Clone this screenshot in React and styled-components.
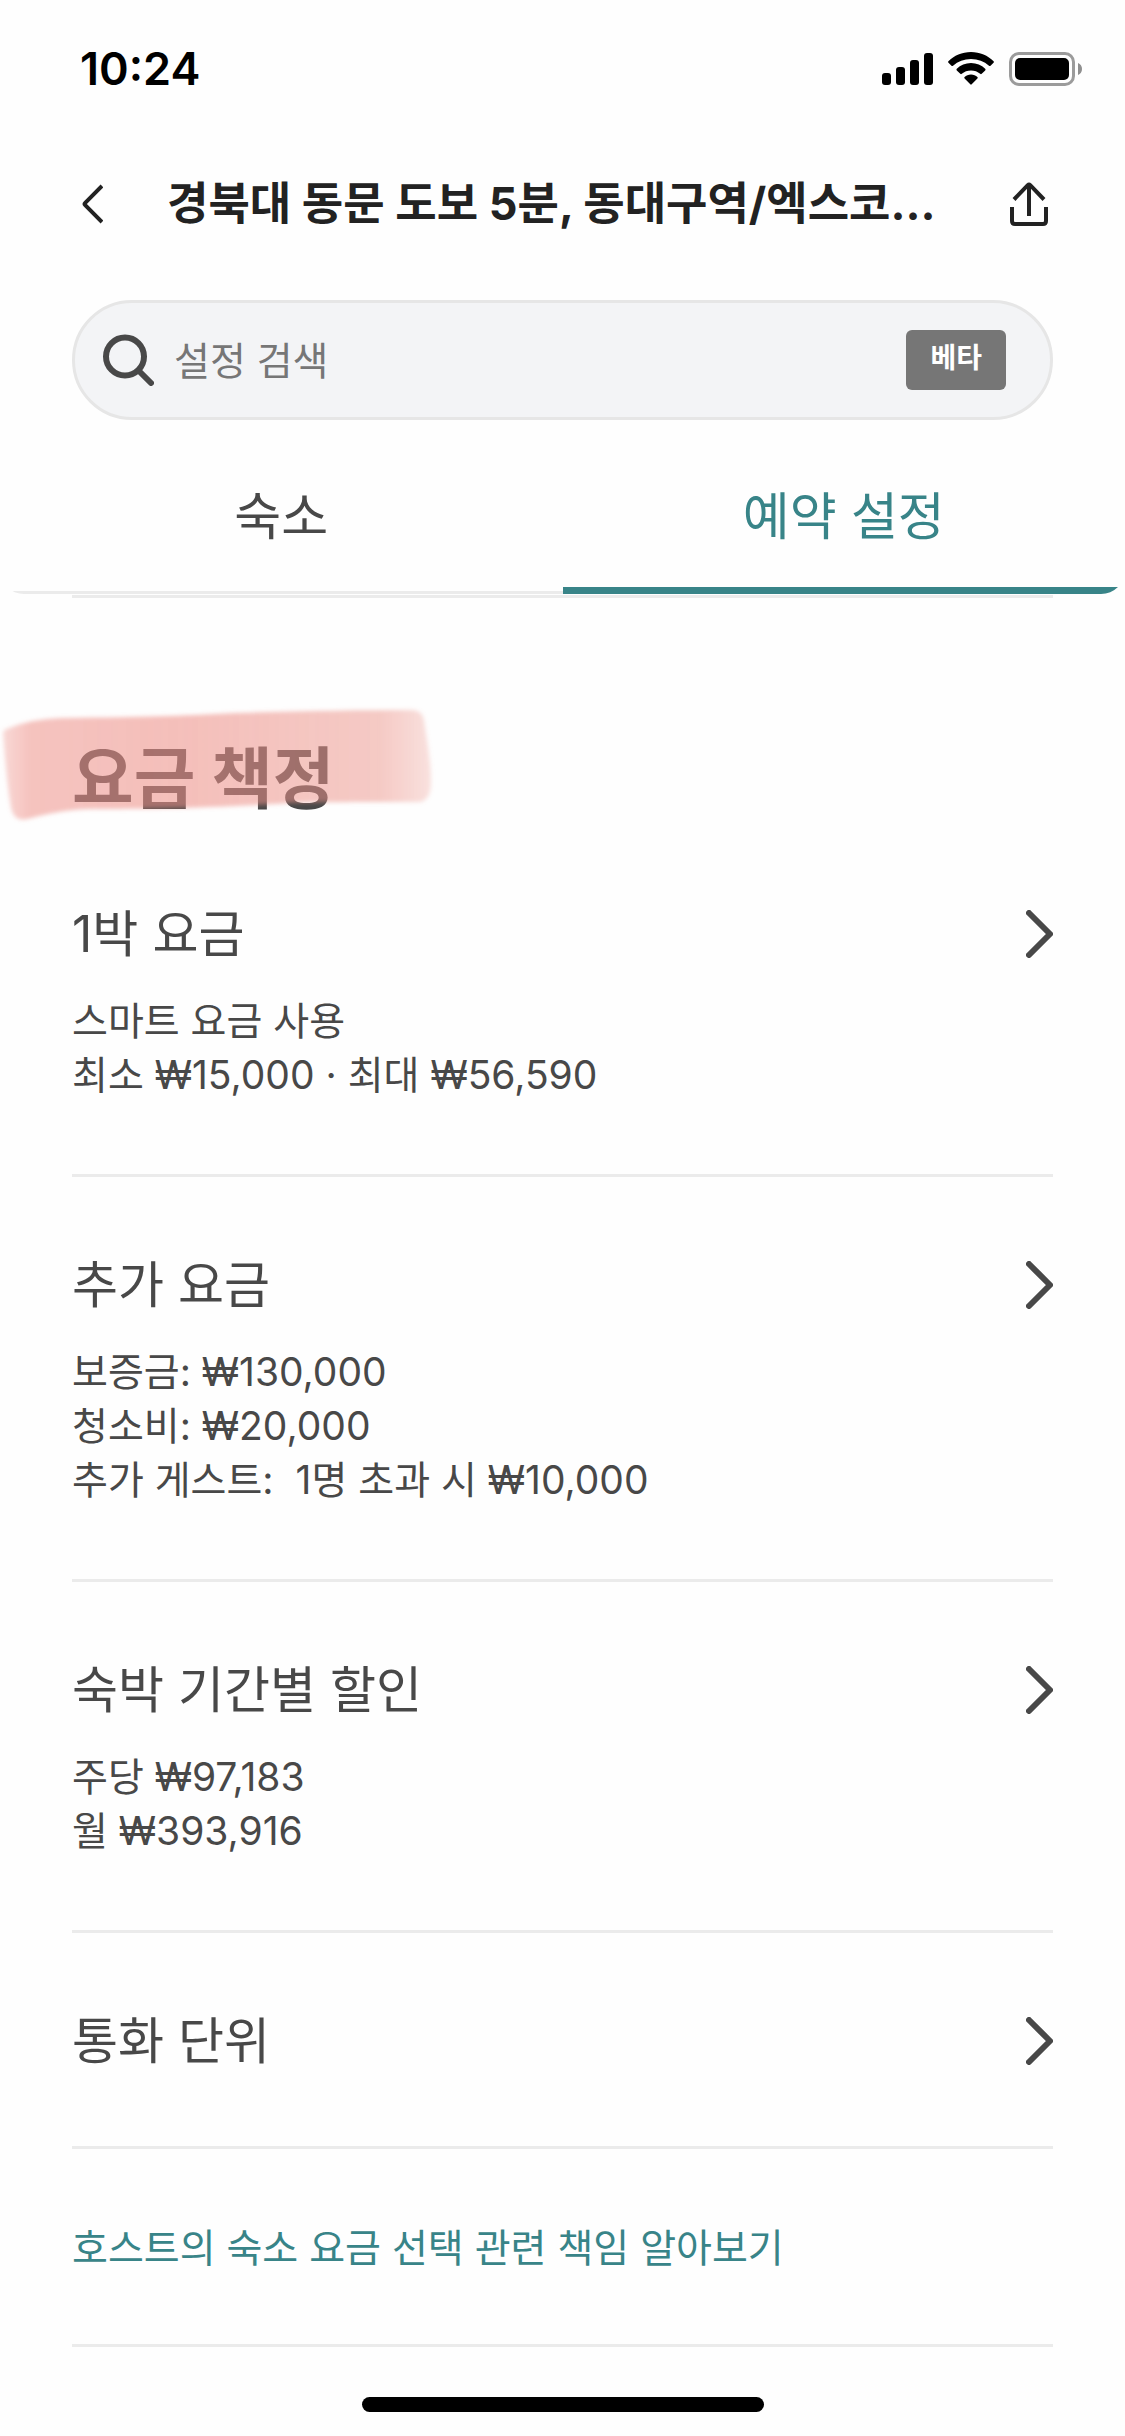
import { useState } from "react";
import styled, { createGlobalStyle } from "styled-components";

const priceSettings = [
    {
        title: "1박 요금",
        lines: ["스마트 요금 사용", "최소 ₩15,000 · 최대 ₩56,590"]
    },
    {
        title: "추가 요금",
        lines: ["보증금: ₩130,000", "청소비: ₩20,000", "추가 게스트:  1명 초과 시 ₩10,000"]
    },
    {
        title: "숙박 기간별 할인",
        lines: ["주당 ₩97,183", "월 ₩393,916"]
    },
    {
        title: "통화 단위",
        lines: []
    }
];

const tabs = ["숙소", "예약 설정"];

export default function App() {
    const [activeTab, setActiveTab] = useState("예약 설정");
    const [search, setSearch] = useState("");

    return (
        <>
            <GlobalStyle />
            <Page>
                <StatusBar />
                <Header>
                    <IconButton aria-label="뒤로">
                        <BackIcon />
                    </IconButton>
                    <HeaderTitle>경북대 동문 도보 5분, 동대구역/엑스코...</HeaderTitle>
                    <IconButton aria-label="공유">
                        <ShareIcon />
                    </IconButton>
                </Header>
                <SearchBox>
                    <SearchIcon />
                    <SearchInput
                        type="text"
                        aria-label="설정 검색"
                        placeholder="설정 검색"
                        value={search}
                        onChange={e => setSearch(e.target.value)}
                    />
                    <Badge>베타</Badge>
                </SearchBox>
                <Tabs role="tablist">
                    {tabs.map(tab => (
                        <Tab
                            key={tab}
                            role="tab"
                            aria-selected={tab === activeTab}
                            $active={tab === activeTab}
                            onClick={() => setActiveTab(tab)}
                        >
                            {tab}
                        </Tab>
                    ))}
                </Tabs>
                <TopDivider />
                <SectionHeader>
                    <h2>요금 책정</h2>
                    <MarkerStroke />
                </SectionHeader>
                <Settings>
                    {priceSettings.map(({ title, lines }) => (
                        <SettingRow key={title}>
                            <SettingHead>
                                {title}
                                <ChevronIcon />
                            </SettingHead>
                            {lines.length > 0 && (
                                <SettingDescription>
                                    {lines.map(line => <SettingLine key={line}>{line}</SettingLine>)}
                                </SettingDescription>
                            )}
                        </SettingRow>
                    ))}
                    <LinkRow>
                        <a href="#responsibility">호스트의 숙소 요금 선택 관련 책임 알아보기</a>
                    </LinkRow>
                </Settings>
                <HomeIndicator />
            </Page>
        </>
    );
}

function StatusBar() {
    return (
        <StatusWrapper>
            <Clock>10:24</Clock>
            <StatusIcons>
                <svg width="51" height="34" viewBox="0 0 51 34">
                    <rect x="0" y="21" width="9" height="12" rx="3" />
                    <rect x="14" y="15" width="9" height="18" rx="3" />
                    <rect x="28" y="8" width="9" height="25" rx="3" />
                    <rect x="42" y="1" width="9" height="32" rx="3" />
                </svg>
                <svg width="46" height="34" viewBox="0 0 46 34">
                    <path d="M23 0C32 0 40 3.600 45.600 9.200Q46.200 10 45.500 10.700L42.500 13.700Q41.700 14.400 41 13.700C36 9.300 30 7 23 7S10 9.300 5 13.700Q4.300 14.400 3.500 13.700L.5 10.700Q-.2 10 .4 9.200C6 3.600 14 0 23 0Z" />
                    <path d="M23 11C28.500 11 33.500 13.200 37.200 16.800Q38 17.600 37.200 18.400L33.700 21.800Q33 22.500 32.200 21.800C29.700 19.600 26.500 18.400 23 18.400S16.300 19.600 13.800 21.800Q13 22.500 12.300 21.800L8.800 18.400Q8 17.600 8.800 16.800C12.500 13.200 17.500 11 23 11Z" />
                    <path d="M23 22.500C25.600 22.500 27.800 23.400 29.400 24.900Q30.200 25.700 29.400 26.500L23.700 32.300Q23 33 22.300 32.300L16.600 26.500Q15.800 25.700 16.600 24.900C18.200 23.400 20.400 22.500 23 22.500Z" />
                </svg>
                <svg width="73" height="34" viewBox="0 0 73 34">
                    <rect x="1.500" y="1.500" width="63" height="31" rx="8.500" fill="none" stroke="#9b9b9b" strokeWidth="3" />
                    <rect x="6" y="6" width="54" height="22" rx="5" />
                    <path d="M69 11C71.500 12 73 14.300 73 17S71.500 22 69 23Z" fill="#8f8f8f" />
                </svg>
            </StatusIcons>
        </StatusWrapper>
    );
}

function BackIcon() {
    return (
        <svg width="21" height="40" viewBox="0 0 21 40" fill="none" stroke="#222" strokeWidth="4" strokeLinejoin="round">
            <path d="M20 2L3.200 18.800Q2 20 3.200 21.200L20 38" />
        </svg>
    );
}

function ShareIcon() {
    return (
        <svg width="38" height="44" viewBox="0 0 38 44" fill="none" stroke="#222" strokeWidth="4">
            <path d="M2 25V39Q2 42 5 42H33Q36 42 36 39V25" />
            <path d="M19 34V3" />
            <path d="M4 17.500L17.800 3.200Q19 2 20.200 3.200L34 17.500" />
        </svg>
    );
}

function SearchIcon() {
    return (
        <svg width="51" height="52" viewBox="0 0 51 52" fill="none" stroke="#484848" strokeWidth="6" strokeLinecap="round">
            <circle cx="22" cy="22.500" r="19" />
            <path d="M36 37L48 49" />
        </svg>
    );
}

function ChevronIcon() {
    return (
        <svg width="27" height="48" viewBox="0 0 27 48" fill="none" stroke="#484848" strokeWidth="6" strokeLinecap="round" strokeLinejoin="round">
            <path d="M3 3L24 24L3 45" />
        </svg>
    );
}

function MarkerStroke() {
    return (
        <Marker width="440" height="130" viewBox="0 0 440 130" aria-hidden="true">
            <defs>
                <linearGradient id="ink" x1="0" x2="1" y1="0" y2="0">
                    <stop offset="0" stopColor="#ee9189" stopOpacity=".34" />
                    <stop offset=".06" stopColor="#ee9189" stopOpacity=".54" />
                    <stop offset=".4" stopColor="#ee9189" stopOpacity=".58" />
                    <stop offset=".88" stopColor="#ec958b" stopOpacity=".5" />
                    <stop offset="1" stopColor="#ec958b" stopOpacity=".28" />
                </linearGradient>
                <filter id="soften" x="-5%" y="-10%" width="110%" height="120%">
                    <feGaussianBlur stdDeviation="2" />
                </filter>
            </defs>
            <path
                fill="url(#ink)"
                filter="url(#soften)"
                d="M3 37C3 34 6 33 12 31C30 24 50 22 70 22C140 21 180 20 235 17C300 15 360 14 412 14Q422 14 424 24C427 46 431 62 431 86Q431 106 418 106C360 106 320 106 290 107C230 111 150 113 90 113C60 114 40 120 27 123Q14 126 11 112C7 88 5 64 3 37Z"
            />
        </Marker>
    );
}

const GlobalStyle = createGlobalStyle`
    * {
        box-sizing: border-box;
        margin: 0;
    }
    body {
        background: #fefefe;
        color: #484848;
        font-family: Inter, "Noto Sans CJK KR", sans-serif;
        font-size: 39px;
        line-height: 54px;
    }
    button, input {
        font: inherit;
        color: inherit;
        border: none;
        background: none;
        padding: 0;
    }
    button {
        cursor: pointer;
    }
    svg {
        display: block;
        flex-shrink: 0;
    }
`

const Page = styled.main`
    width: 100%;
`

const StatusWrapper = styled.div`
    height: 138px;
    padding: 0 43px 0 80px;
    display: flex;
    align-items: center;
    justify-content: space-between;
    color: #000000;
`

const Clock = styled.span`
    font-size: 45px;
    font-weight: 600;
`

const StatusIcons = styled.div`
    display: flex;
    gap: 15px;
`

const Header = styled.header`
    height: 132px;
    padding: 0 77px 0 82px;
    display: flex;
    align-items: center;
    color: #222222;
`

const IconButton = styled.button`
    display: flex;
    flex-shrink: 0;
`

const HeaderTitle = styled.h1`
    flex: 1;
    padding-left: 64px;
    font-size: 45px;
    line-height: 60px;
    font-weight: 700;
    white-space: nowrap;
`

const SearchBox = styled.div`
    height: 120px;
    margin: 30px 72px 0;
    padding: 0 44px 0 28px;
    display: flex;
    align-items: center;
    gap: 20px;
    border: 3px solid #e6e6e6;
    border-radius: 60px;
    background: #f3f4f6;
`

const SearchInput = styled.input`
    flex: 1;
    min-width: 0;
    height: 60px;
    outline: none;
    &::placeholder {
        color: #767676;
        opacity: 1;
    }
`

const Badge = styled.span`
    height: 60px;
    padding: 0 24px;
    border-radius: 6px;
    background: #767676;
    color: #ffffff;
    font-size: 28px;
    line-height: 56px;
    font-weight: 700;
`

const Tabs = styled.div`
    display: flex;
    border-radius: 0 0 24px 24px;
    overflow: hidden;
`

const Tab = styled.button`
    flex: 1;
    height: 174px;
    padding-top: ${props => props.$active ? "27px" : "23px"};
    font-size: 51px;
    line-height: 72px;
    color: ${props => props.$active ? "#388488" : "#484848"};
    border-bottom: ${props => props.$active ? "7px solid #388488" : "3px solid #ebebeb"};
`

const TopDivider = styled.hr`
    margin: 1px 72px 0;
    border: none;
    border-top: 3px solid #ebebeb;
`

const SectionHeader = styled.div`
    position: relative;
    padding: 136px 72px 2px;
    & h2 {
        font-size: 67px;
        line-height: 90px;
        font-weight: 700;
    }
`

const Marker = styled.svg`
    position: absolute;
    left: 0;
    bottom: 0;
`

const Settings = styled.section`
    padding: 0 72px;
`

const SettingRow = styled.button`
    display: block;
    width: 100%;
    padding: 72px 0 69px;
    border-bottom: 3px solid #ebebeb;
    text-align: left;
`

const SettingHead = styled.div`
    display: flex;
    align-items: center;
    justify-content: space-between;
    font-size: 50px;
    line-height: 72px;
`

const SettingDescription = styled.div`
    padding: 24px 0 3px;
`

const SettingLine = styled.p`
    white-space: pre-wrap;
`

const LinkRow = styled.div`
    padding: 72px 0 69px;
    border-bottom: 3px solid #ebebeb;
    & a {
        display: block;
        color: #388488;
        text-decoration: none;
    }
`

const HomeIndicator = styled.div`
    width: 402px;
    height: 15px;
    margin: 50px auto 24px;
    border-radius: 8px;
    background: #000000;
`
